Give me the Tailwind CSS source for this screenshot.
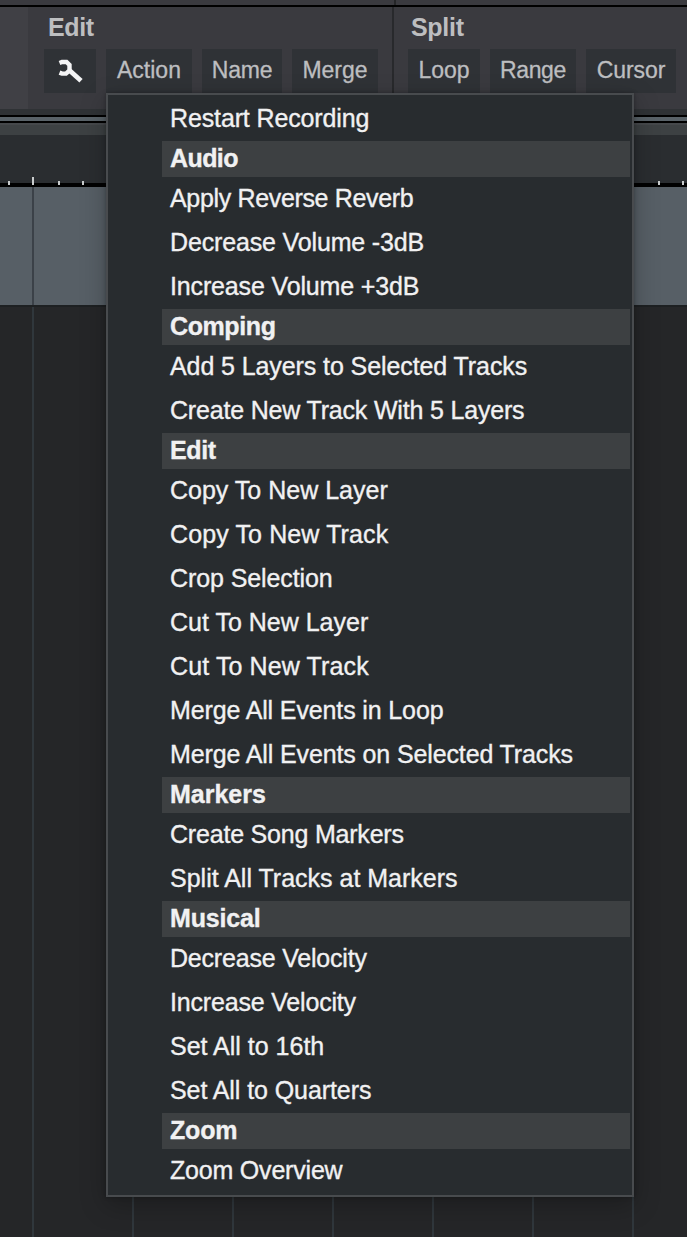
<!DOCTYPE html>
<html lang="en">
<head>
<meta charset="utf-8">
<title>Action menu</title>
<script src="https://cdn.jsdelivr.net/npm/@tailwindcss/browser@4"></script>
</head>
<body class="bg-[#252628] font-['Liberation_Sans',Arial,sans-serif]">
<div class="relative flex h-[1237px] w-[687px] flex-col overflow-hidden">
  <!-- toolbar -->
  <div class="flex h-[5px] shrink-0 bg-[#3a3a3f]"><div class="ml-[394px] w-0.5 bg-[#252628]"></div></div>
  <div class="h-0.5 shrink-0 bg-black"></div>
  <div class="flex h-[102px] shrink-0 bg-[#3a3a3f] text-[#bdbec0]">
    <div class="w-7 shrink-0 bg-[#404045]"></div>
    <section class="w-[366px] shrink-0 border-r-2 border-[#28292c] pl-4">
      <h2 class="h-[42px] pl-1 pt-[5px] text-[25px] leading-[30px] font-bold tracking-[-0.4px]">Edit</h2>
      <div class="flex h-11 gap-[10px] text-[23px] leading-[42px] [-webkit-text-stroke:0.3px_currentColor]">
        <button class="flex w-[52px] bg-[#2f3236]" aria-label="Tools">
          <svg class="h-11 w-[52px] blur-[0.7px]" viewBox="0 0 52 44" fill="none" stroke="#f4f4f5"><path d="M15.5 14L18 13H22.5L25.5 16V21.5L22 24.6H18L15.5 23.6" stroke-width="4.4"/><path d="M24.5 20.5L37 31.8" stroke-width="4.8"/></svg>
        </button>
        <button class="w-[86px] bg-[#2f3236] pb-0.5">Action</button>
        <button class="w-20 bg-[#2f3236] pb-0.5 tracking-[-0.2px]">Name</button>
        <button class="w-[86px] bg-[#2f3236] pb-0.5">Merge</button>
      </div>
    </section>
    <section class="flex-1 pl-[14px]">
      <h2 class="h-[42px] pl-[3px] pt-[5px] text-[25px] leading-[30px] font-bold tracking-[-0.3px]">Split</h2>
      <div class="flex h-11 gap-[10px] text-[23px] leading-[42px] [-webkit-text-stroke:0.3px_currentColor]">
        <button class="w-[72px] bg-[#2f3236] pb-0.5">Loop</button>
        <button class="w-[86px] bg-[#2f3236] pb-0.5 tracking-[-0.4px]">Range</button>
        <button class="w-[90px] bg-[#2f3236] pb-0.5 tracking-[-0.1px]">Cursor</button>
      </div>
    </section>
  </div>
  <div class="h-1.5 shrink-0 bg-[#2f3235]"></div>
  <div class="h-2 shrink-0 border-y-2 border-black bg-[#596268]"></div>
  <div class="h-3 shrink-0 border-t-2 border-[#45484b] bg-[#3d4143]"></div>
  <!-- ruler -->
  <div class="flex h-[50px] shrink-0 items-end bg-linear-to-b from-[#2a2d30] from-[48px] to-black to-[48px] text-[#c9cccd]">
    <i class="ml-2 h-1 w-0.5 bg-current"></i><i class="ml-[22px] h-2 w-0.5 bg-current"></i><i class="ml-6 h-1 w-0.5 bg-current"></i><i class="ml-[22px] h-1 w-0.5 bg-current"></i><i class="ml-[574px] h-1 w-0.5 bg-current"></i><i class="ml-[22px] h-1 w-0.5 bg-current"></i>
  </div>
  <div class="h-0.5 shrink-0 bg-black"></div>
  <!-- track and empty arrangement -->
  <div class="flex h-[118px] shrink-0 bg-[#575f66]"><div class="ml-8 w-0.5 bg-[#3b4148]"></div></div>
  <div class="flex flex-1 gap-[98px] border-t-2 border-[#1d2022] pl-8">
    <div class="w-0.5 bg-[#30373c]"></div><div class="w-0.5 bg-[#30373c]"></div><div class="w-0.5 bg-[#30373c]"></div><div class="w-0.5 bg-[#30373c]"></div><div class="w-0.5 bg-[#30373c]"></div><div class="w-0.5 bg-[#30373c]"></div><div class="w-0.5 bg-[#30373c]"></div>
  </div>

  <!-- popup menu -->
  <div class="absolute top-[93px] left-[106px] h-[1104px] w-[528px] border-2 border-[#484b4e] bg-[#282c2f] py-0.5 pr-0.5 pl-[54px] text-[25px] whitespace-nowrap text-[#f1f1f2] shadow-[0_8px_24px_rgba(0,0,0,0.25),0_0_4px_rgba(0,0,0,0.3)] [-webkit-text-stroke:0.35px_currentColor]">
    <div class="h-11 pl-2 leading-[42px] tracking-[-0.13px]">Restart Recording</div>
    <div class="h-9 bg-[#3d4042] pl-2 leading-[34px] font-bold tracking-[-0.6px]">Audio</div>
    <div class="h-11 pl-2 leading-[42px] tracking-[-0.34px]">Apply Reverse Reverb</div>
    <div class="h-11 pl-2 leading-[42px] tracking-[-0.15px]">Decrease Volume -3dB</div>
    <div class="h-11 pl-2 leading-[42px] tracking-[-0.15px]">Increase Volume +3dB</div>
    <div class="h-9 bg-[#3d4042] pl-2 leading-[34px] font-bold tracking-[-0.4px]">Comping</div>
    <div class="h-11 pl-2 leading-[42px] tracking-[-0.09px]">Add 5 Layers to Selected Tracks</div>
    <div class="h-11 pl-2 leading-[42px] tracking-[-0.18px]">Create New Track With 5 Layers</div>
    <div class="h-9 bg-[#3d4042] pl-2 leading-[34px] font-bold tracking-[-0.4px]">Edit</div>
    <div class="h-11 pl-2 leading-[42px]">Copy To New Layer</div>
    <div class="h-11 pl-2 leading-[42px] tracking-[0.12px]">Copy To New Track</div>
    <div class="h-11 pl-2 leading-[42px] tracking-[-0.1px]">Crop Selection</div>
    <div class="h-11 pl-2 leading-[42px]">Cut To New Layer</div>
    <div class="h-11 pl-2 leading-[42px] tracking-[0.12px]">Cut To New Track</div>
    <div class="h-11 pl-2 leading-[42px] tracking-[-0.13px]">Merge All Events in Loop</div>
    <div class="h-11 pl-2 leading-[42px] tracking-[-0.12px]">Merge All Events on Selected Tracks</div>
    <div class="h-9 bg-[#3d4042] pl-2 leading-[34px] font-bold">Markers</div>
    <div class="h-11 pl-2 leading-[42px] tracking-[-0.2px]">Create Song Markers</div>
    <div class="h-11 pl-2 leading-[42px]">Split All Tracks at Markers</div>
    <div class="h-9 bg-[#3d4042] pl-2 leading-[34px] font-bold tracking-[-0.15px]">Musical</div>
    <div class="h-11 pl-2 leading-[42px] tracking-[-0.2px]">Decrease Velocity</div>
    <div class="h-11 pl-2 leading-[42px] tracking-[-0.18px]">Increase Velocity</div>
    <div class="h-11 pl-2 leading-[42px]">Set All to 16th</div>
    <div class="h-11 pl-2 leading-[42px] tracking-[-0.08px]">Set All to Quarters</div>
    <div class="h-9 bg-[#3d4042] pl-2 leading-[34px] font-bold tracking-[-0.2px]">Zoom</div>
    <div class="h-11 pl-2 leading-[42px] tracking-[-0.2px]">Zoom Overview</div>
  </div>
</div>
</body>
</html>
